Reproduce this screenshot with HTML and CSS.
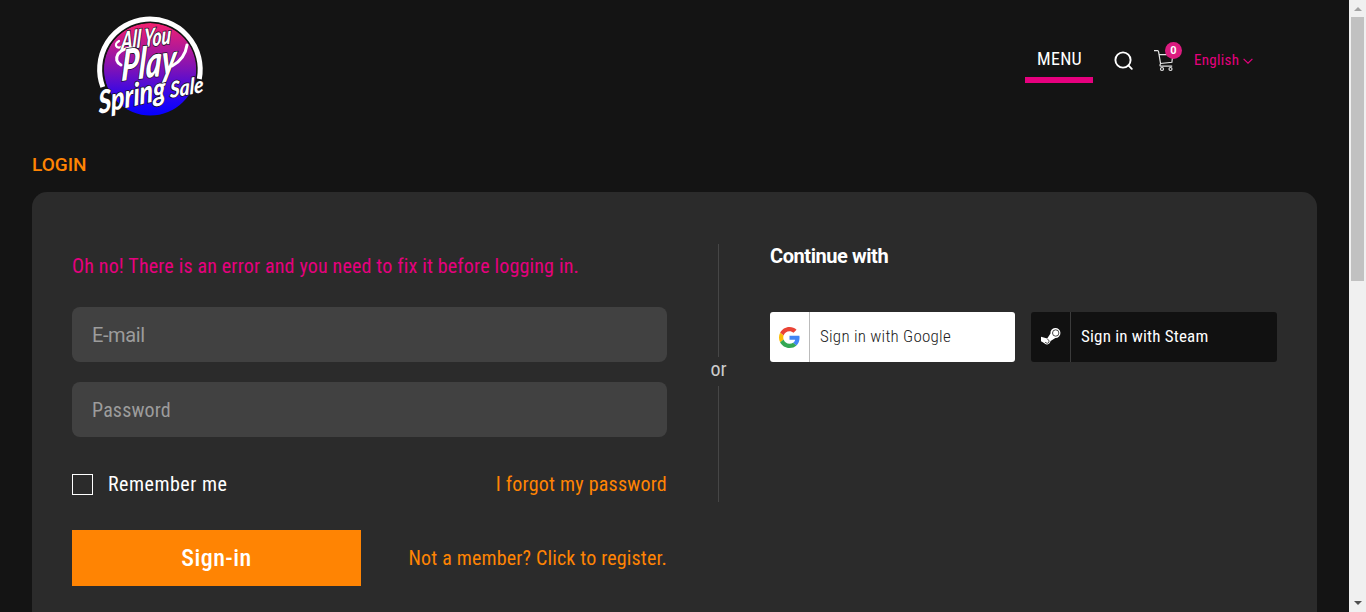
FILE: index.html
```html
<!DOCTYPE html>
<html lang="en">
<head>
<meta charset="utf-8">
<title>Login</title>
<link rel="stylesheet" href="styles.css">
</head>
<body>
<div class="page">
  <header class="header">
    <svg class="logo" viewBox="0 0 120 115" width="120" height="115">
      <defs>
        <linearGradient id="disc" x1="0" y1="0" x2="0" y2="1">
          <stop offset="0" stop-color="#f3206f"/>
          <stop offset=".5" stop-color="#7d12b8"/>
          <stop offset=".85" stop-color="#1f04f5"/>
          <stop offset="1" stop-color="#0500ff"/>
        </linearGradient>
      </defs>
      <circle cx="60.300" cy="59.300" r="46.300" fill="url(#disc)"/>
      <path d="M12.800 77A50.300 50.300 0 1 1 109.300 69" fill="none" stroke="#141414" stroke-width="8"/>
      <path d="M12.800 77A50.300 50.300 0 1 1 109.300 69" fill="none" stroke="#fff" stroke-width="5"/>
      <g class="logo-text">
        <path d="M35 33Q31 39 27 37Q24 34 29 31" stroke-width="2.200"/>
        <text transform="translate(31 40) rotate(-7) skewX(-10)" font-size="25" textLength="50" lengthAdjust="spacingAndGlyphs">All You</text>
        <path d="M31 55Q24 51 28 44Q33 38 42 38" stroke-width="3"/>
        <text transform="translate(31 71) rotate(-7) skewX(-10)" font-size="43" textLength="55" lengthAdjust="spacingAndGlyphs">Play</text>
        <path d="M82 56Q95 49 97 35" stroke-width="3"/>
        <text transform="translate(9 104) rotate(-13) skewX(-10)" font-size="31" textLength="69" lengthAdjust="spacingAndGlyphs">Spring</text>
        <text transform="translate(80 88) rotate(-10) skewX(-10)" font-size="22" textLength="34" lengthAdjust="spacingAndGlyphs">Sale</text>
      </g>
    </svg>
    <nav class="nav">
      <a class="menu"><span class="t t-menu">MENU</span></a>
      <svg class="search" width="20" height="20" viewBox="0 0 20 20"><circle cx="9" cy="9" r="7.600"/><path d="M14.400 14.400L17.800 17.800"/></svg>
      <div class="cart">
        <svg width="20" height="22" viewBox="0 0 20 22"><path d="M0 .7H3.600Q4.400.7 4.600 1.800L6.600 13.800M5.200 4.600H18.800L17.900 12.300L6.600 13.500Q5.200 16.200 7 16.200H18.200"/><circle cx="8" cy="19" r="1.500"/><circle cx="16.500" cy="19" r="1.500"/></svg>
        <span class="badge">0</span>
      </div>
      <div class="lang"><span class="t t-lang">English</span><svg width="10" height="6" viewBox="0 0 10 6"><path d="M.6.9L5 5.200L9.400.9"/></svg></div>
    </nav>
  </header>
  <h1 class="title"><span class="t t-title">LOGIN</span></h1>
  <main class="card">
    <form class="form">
      <p class="error"><span class="t t-error">Oh no! There is an error and you need to fix it before logging in.</span></p>
      <div class="field"><span class="t t-email">E-mail</span></div>
      <div class="field"><span class="t t-pass">Password</span></div>
      <div class="row first">
        <label class="remember"><span class="box"></span><span class="t t-rem">Remember me</span></label>
        <a class="link"><span class="t t-forgot">I forgot my password</span></a>
      </div>
      <div class="row last">
        <div class="submit"><span class="t t-sign">Sign-in</span></div>
        <a class="link"><span class="t t-reg">Not a member? Click to register.</span></a>
      </div>
    </form>
    <div class="divider"><i class="line top"></i><span class="t t-or">or</span><i class="line bottom"></i></div>
    <section class="social">
      <h2><span class="t t-cont">Continue with</span></h2>
      <div class="buttons">
        <a class="sso google"><span class="ico"><svg width="21" height="21" viewBox="0 0 48 48"><path fill="#ea4335" d="M24 9.500c3.500 0 6.700 1.200 9.200 3.600l6.900-6.900C35.900 2.400 30.500 0 24 0 14.600 0 6.500 5.400 2.600 13.200l8 6.200C12.400 13.700 17.700 9.500 24 9.500z"/><path fill="#4285f4" d="M47 24.500c0-1.600-.2-3.100-.4-4.500H24v9h12.900c-.6 3-2.200 5.500-4.800 7.200l7.700 6C44.400 38 47 32.100 47 24.500z"/><path fill="#fbbc05" d="M10.500 28.600c-.5-1.500-.8-3-.8-4.600s.3-3.100.8-4.600l-8-6.200C.9 16.500 0 20.100 0 24s.9 7.500 2.600 10.800z"/><path fill="#34a853" d="M24 48c6.500 0 11.900-2.100 15.900-5.800l-7.700-6c-2.200 1.400-4.900 2.300-8.200 2.300-6.300 0-11.600-4.200-13.500-9.900l-8 6.200C6.500 42.600 14.600 48 24 48z"/></svg></span><span class="t t-goog">Sign in with Google</span></a>
        <a class="sso steam"><span class="ico"><svg width="22" height="20" viewBox="0 0 22 20"><path fill="#fff" d="M1 9.700L7.200 11.600L10.500 6.600A5 5 0 1 1 15.400 10.900L10.600 14.100A3.700 3.700 0 0 1 4 16L1 14.300z"/><circle cx="15.700" cy="6" r="3.200" fill="#fff" stroke="#333" stroke-width=".9"/><path d="M5 15.300Q7.500 17.500 9 15.200Q9.800 13 7.300 12.200" fill="none" stroke="#444" stroke-width=".9"/></svg></span><span class="t t-steam">Sign in with Steam</span></a>
      </div>
    </section>
  </main>
</div>
<aside class="scrollbar"><i class="arrow up"></i><i class="thumb"></i><i class="arrow down"></i></aside>
</body>
</html>
```
FILE: styles.css
```css
* { box-sizing: border-box; }
body { margin: 0; height: 612px; overflow: hidden; display: flex; background: #141414; color: #fff; font: 20px/26px Roboto, "Liberation Sans", sans-serif; }
.page { flex: 1; height: 612px; overflow: hidden; padding: 0 32px; }
.header { height: 150px; display: flex; justify-content: space-between; padding: 10px 64px 0 58px; }
.logo { display: block; }
.logo-text { font-family: Lato, sans-serif; font-weight: 900; font-style: italic; fill: #fff; stroke: #17101f; stroke-width: 1.600px; paint-order: stroke; }
.logo-text path { fill: none; stroke: #fff; stroke-linecap: round; }
.nav { display: flex; align-items: flex-start; }
.menu { width: 68px; height: 73px; padding: 36px 0 0 12px; border-bottom: 6px solid #e6007e; font-size: 18px; }
.search { margin: 41px 0 0 21px; fill: none; stroke: #fff; stroke-width: 1.900; stroke-linecap: round; }
.cart { position: relative; width: 40px; height: 22px; margin: 40px 0 0 20px; }
.cart svg { display: block; fill: none; stroke: #e5e5e5; stroke-width: 1.200; }
.badge { position: absolute; left: 11px; top: -8px; width: 17px; height: 17px; border-radius: 50%; background: #dc1b80; font-size: 11px; line-height: 17px; font-weight: 700; text-align: center; }
.lang { width: 59px; display: flex; justify-content: space-between; align-items: center; margin-top: 37px; color: #e6007e; font-size: 15px; }
.lang svg { margin-top: 2px; fill: none; stroke: #e6007e; stroke-width: 1.200; }
.title { margin: 0; height: 42px; padding-top: 2px; font-size: 19px; font-weight: 500; color: #ff8403; }
.card { height: 480px; background: #2b2b2b; border-radius: 15px; padding: 52px 40px 0; display: flex; }
.form { width: 595px; }
.error { margin: 9px 0 28px; color: #e6007e; white-space: nowrap; }
.field { height: 55px; margin-bottom: 20px; padding: 15px 20px; border-radius: 8px; background: #414141; color: #9c9c9c; }
.row { display: flex; justify-content: space-between; align-items: center; height: 56px; white-space: nowrap; }
.first { margin-top: -1px; }
.last { margin-top: 18px; }
.remember { display: flex; align-items: center; gap: 15px; }
.box { width: 21px; height: 21px; border: 1px solid #fff; }
.link { color: #ff8403; }
.submit { width: 289px; height: 56px; background: #ff8403; font-size: 24px; font-weight: 500; display: flex; align-items: center; justify-content: center; }
.divider { width: 103px; display: flex; flex-direction: column; align-items: center; color: #ccc; }
.line { width: 1px; background: #464646; }
.top { height: 113px; }
.bottom { height: 116px; margin-top: 4px; }
.social { width: 507px; }
h2 { margin: 0 0 43px; font-size: 20px; line-height: 25px; font-weight: 700; }
.buttons { display: flex; gap: 16px; }
.sso { height: 50px; border-radius: 3px; display: flex; align-items: center; white-space: nowrap; font-size: 17px; }
.google { width: 245px; background: #fff; color: #222; font-weight: 300; }
.steam { width: 246px; background: #111; }
.ico { width: 40px; height: 50px; border-right: 1px solid #bbb; margin-right: 10px; display: flex; align-items: center; justify-content: center; }
.steam .ico { border-color: #3b3b3b; }
.t { display: inline-block; font-stretch: 75%; }
.t-menu { letter-spacing: .3px; }
.t-lang { letter-spacing: .3px; }
.t-title { font-stretch: 100%; }
.t-error { letter-spacing: .17px; }
.t-email { font-stretch: 100%; letter-spacing: -.4px; }
.t-pass { letter-spacing: .15px; }
.t-rem { letter-spacing: .5px; }
.t-forgot { letter-spacing: .22px; }
.t-reg { letter-spacing: .17px; }
.t-sign { letter-spacing: .45px; }
.t-or { margin-top: -1px; }
.t-cont { font-stretch: 100%; letter-spacing: -.43px; }
.t-goog { letter-spacing: .24px; margin-top: -2px; }
.t-steam { letter-spacing: .18px; margin-top: -2px; }
.scrollbar { width: 17px; height: 612px; background: #f0f0f0; display: flex; flex-direction: column; align-items: center; }
.arrow { border: 4px solid transparent; }
.up { margin-top: 3px; border-bottom-color: #a3a3a3; margin-bottom: 6px; }
.thumb { width: 13px; height: 264px; background: #c1c1c1; }
.down { border-top-color: #505050; margin-top: auto; margin-bottom: 3px; }
```
